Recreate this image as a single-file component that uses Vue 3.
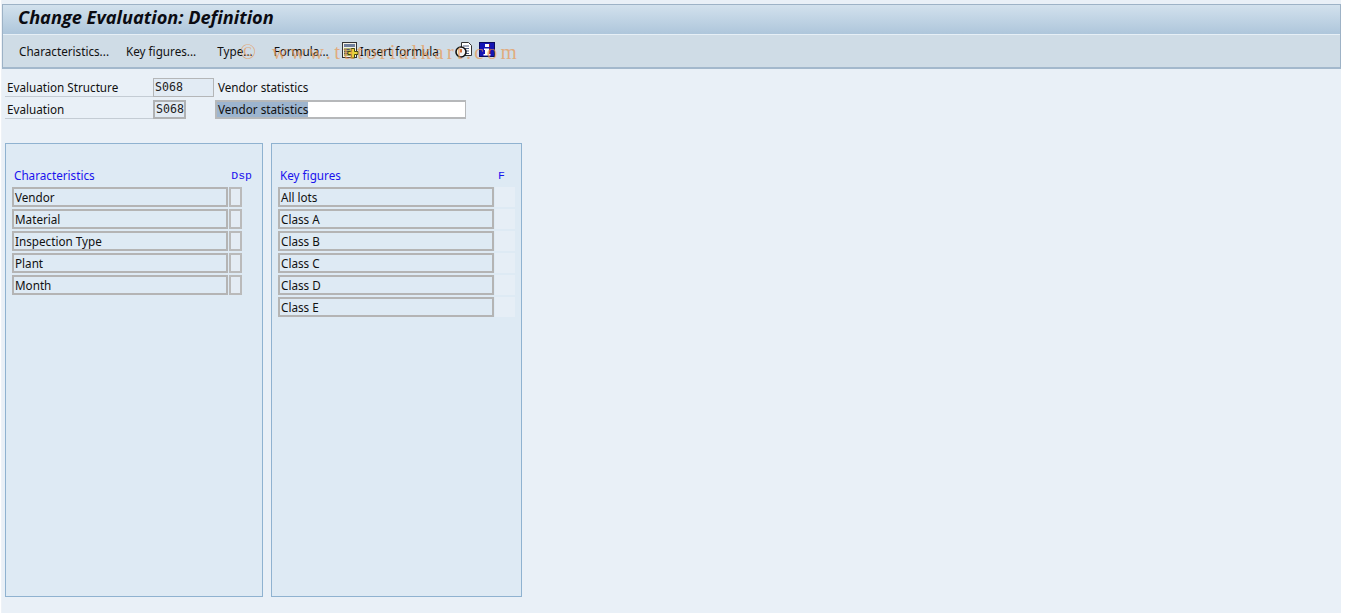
<script setup>
const chars = ['Vendor', 'Material', 'Inspection Type', 'Plant', 'Month']
const figures = ['All lots', 'Class A', 'Class B', 'Class C', 'Class D', 'Class E']
</script>

<template>
  <div class="page">
    <div class="main">
      <header class="head">
        <h1 class="title">Change Evaluation: Definition</h1>
        <div class="toolbar">
          <span class="btn b1">Characteristics...</span>
          <span class="btn b2">Key figures...</span>
          <span class="btn b3">Type...</span>
          <span class="btn b4">Formula...</span>
          <svg class="ico i1" width="17" height="17" viewBox="0 0 17 17">
            <rect x="0.5" y="0.5" width="14" height="15" fill="#f4f1e6" stroke="#333" />
            <rect x="2" y="2" width="11" height="3" fill="#6f7f9c" />
            <rect x="2" y="6" width="11" height="8" fill="#a9b26a" />
            <path d="M2 7.500h6M2 9.500h4M2 11.500h4" stroke="#556" stroke-width="1" />
            <path d="M9.500 6.500h3v3h3.500v3h-3.500v3.500h-3v-3.500H6v-3h3.500z" fill="#e9d43a" stroke="#4a4a10" stroke-width="1" />
          </svg>
          <span class="btn b5">Insert formula</span>
          <svg class="ico i2" width="17" height="17" viewBox="0 0 17 17">
            <path d="M6.500 0.500h7l3 3v10h-10z" fill="#fff" stroke="#333" />
            <path d="M8 4h6M9 6.500h5M9 9h5M9 11.500h5" stroke="#4a5a80" stroke-width="1" />
            <circle cx="6" cy="10" r="5" fill="#f4f4f4" stroke="#111" stroke-width="1.600" />
            <path d="M6 7v3.500" stroke="#c44a10" stroke-width="1.600" />
          </svg>
          <svg class="ico i3" width="17" height="17" viewBox="0 0 17 17">
            <rect x="0.500" y="0.500" width="15" height="14" fill="#1414b4" stroke="#0b0b60" />
            <rect x="6" y="2" width="4" height="3" fill="#fff" />
            <path d="M5 6.500h5v5.500h1.500v1.500H4.500V12H6V8H5z" fill="#fff" />
            <path d="M10 6.500h1.500V12H10zM10 2h1v3h-1z" fill="#8b1a3a" />
          </svg>
        </div>
      </header>

      <section class="form">
        <div class="row">
          <label class="lab">Evaluation Structure</label>
          <span class="key key-wide">S068</span>
          <span class="desc">Vendor statistics</span>
        </div>
        <div class="row">
          <label class="lab">Evaluation</label>
          <span class="key key-edit">S068</span>
          <span class="input"><span class="sel">Vendor statistics</span></span>
        </div>
      </section>

      <section class="panels">
        <div class="panel p1">
          <div class="cols">
            <span class="colh">Characteristics</span>
            <span class="colh mono">Dsp</span>
          </div>
          <div v-for="c in chars" :key="c" class="line">
            <span class="cell">{{ c }}</span>
            <span class="check"></span>
          </div>
        </div>
        <div class="panel p2">
          <div class="cols">
            <span class="colh">Key figures</span>
            <span class="colh mono">F</span>
          </div>
          <div v-for="f in figures" :key="f" class="line">
            <span class="cell">{{ f }}</span>
            <span class="blank"></span>
          </div>
        </div>
      </section>
    </div>
    <div class="mark"><span class="copy">©</span>www.tutorialkart.com</div>
  </div>
</template>

<style>
html, body { margin: 0; background: #fff; }
</style>

<style scoped>
.page {
  position: relative;
  width: 1354px;
  height: 613px;
  overflow: hidden;
  background: #fff;
  font-family: "Noto Sans", "Liberation Sans", sans-serif;
  font-size: 11.7px;
  color: #111;
}
.main {
  box-sizing: border-box;
  width: 1340px;
  height: 613px;
  margin-left: 1px;
  padding-top: 4px;
  background: #e9f0f7;
  border-left: 1px solid #eef2f7;
}
.head {
  border: 1px solid #9db2c6;
  border-bottom: 2px solid #a3b8cc;
  height: 65px;
  box-sizing: border-box;
  background: #cfdce6;
}
.title {
  margin: 0;
  height: 30px;
  box-sizing: border-box;
  padding: 0 0 0 15px;
  font: italic bold 18.2px/24px "Open Sans", "Liberation Sans", sans-serif;
  color: #0b0b12;
  background: linear-gradient(#d2e1ed, #aec6db);
  border-bottom: 1px solid #e6eff6;
}
.toolbar {
  display: flex;
  align-items: center;
  height: 32px;
  padding-left: 16px;
}
.btn { line-height: 16px; white-space: nowrap; }
.b2 { margin-left: 17px; }
.b3 { margin-left: 21px; }
.b4 { margin-left: 21px; }
.ico { display: block; flex: none; margin-top: -2px; }
.i1 { margin-left: 13px; }
.b5 { margin-left: 1px; }
.i2 { margin-left: 16px; }
.i3 { margin-left: 7px; }

.form {
  display: flex;
  flex-direction: column;
  gap: 3px;
  padding: 9px 0 0 3px;
}
.row { display: flex; align-items: stretch; height: 19px; }
.lab {
  box-sizing: border-box;
  width: 148px;
  padding-left: 2px;
  line-height: 19px;
  border-bottom: 1px solid #c4ccd4;
}
.key {
  box-sizing: border-box;
  height: 19px;
  padding-left: 1px;
  font: 11.6px/17px "DejaVu Sans Mono", "Liberation Mono", monospace;
  color: #222;
  border: 1px solid #b4b6b8;
  background: #e2ebf4;
}
.key-wide { width: 61px; }
.key-edit { width: 33px; border: 2px solid #b0b2b4; line-height: 15px; }
.desc { margin-left: 4px; line-height: 19px; }
.input {
  box-sizing: border-box;
  display: flex;
  align-items: flex-start;
  width: 251px;
  height: 19px;
  margin-left: 29px;
  background: #fff;
  border: 2px solid #b6b8ba;
  border-right-width: 1px;
}
.sel { padding-left: 1px; line-height: 15px; height: 15px; background: #9db5cf; }

.panels {
  display: flex;
  gap: 8px;
  margin-top: 24px;
  padding-left: 3px;
}
.panel {
  box-sizing: border-box;
  height: 454px;
  padding: 23px 6px 0;
  background: #deeaf4;
  border: 1px solid #8fb2d0;
}
.p1 { width: 258px; }
.p2 { width: 251px; }
.cols {
  display: flex;
  justify-content: space-between;
  height: 20px;
  line-height: 17px;
  color: #1a12ee;
}
.p1 .cols { padding: 0 4px 0 2px; }
.p2 .cols { padding: 0 10px 0 2px; }
.mono { font: 11.500px/18px "Liberation Mono", "DejaVu Sans Mono", monospace; }
.line { display: flex; height: 22px; }
.cell {
  box-sizing: border-box;
  width: 216px;
  height: 20px;
  padding-left: 1px;
  line-height: 16px;
  background: #deeaf4;
  border: 2px solid #b4b4b4;
}
.check {
  box-sizing: border-box;
  width: 13px;
  height: 20px;
  margin-left: 1px;
  background: #e4ecf4;
  border: 2px solid #bababa;
}
.blank {
  width: 20px;
  height: 20px;
  margin-left: 1px;
  background: #e6eef6;
}
.mark {
  position: absolute;
  left: 240px;
  top: 38px;
  font: 21px/28px "Liberation Serif", serif;
  letter-spacing: 3.200px;
  color: rgba(232, 150, 80, 0.7);
  white-space: nowrap;
  pointer-events: none;
}
.copy { display: inline-block; width: 32px; }
</style>
